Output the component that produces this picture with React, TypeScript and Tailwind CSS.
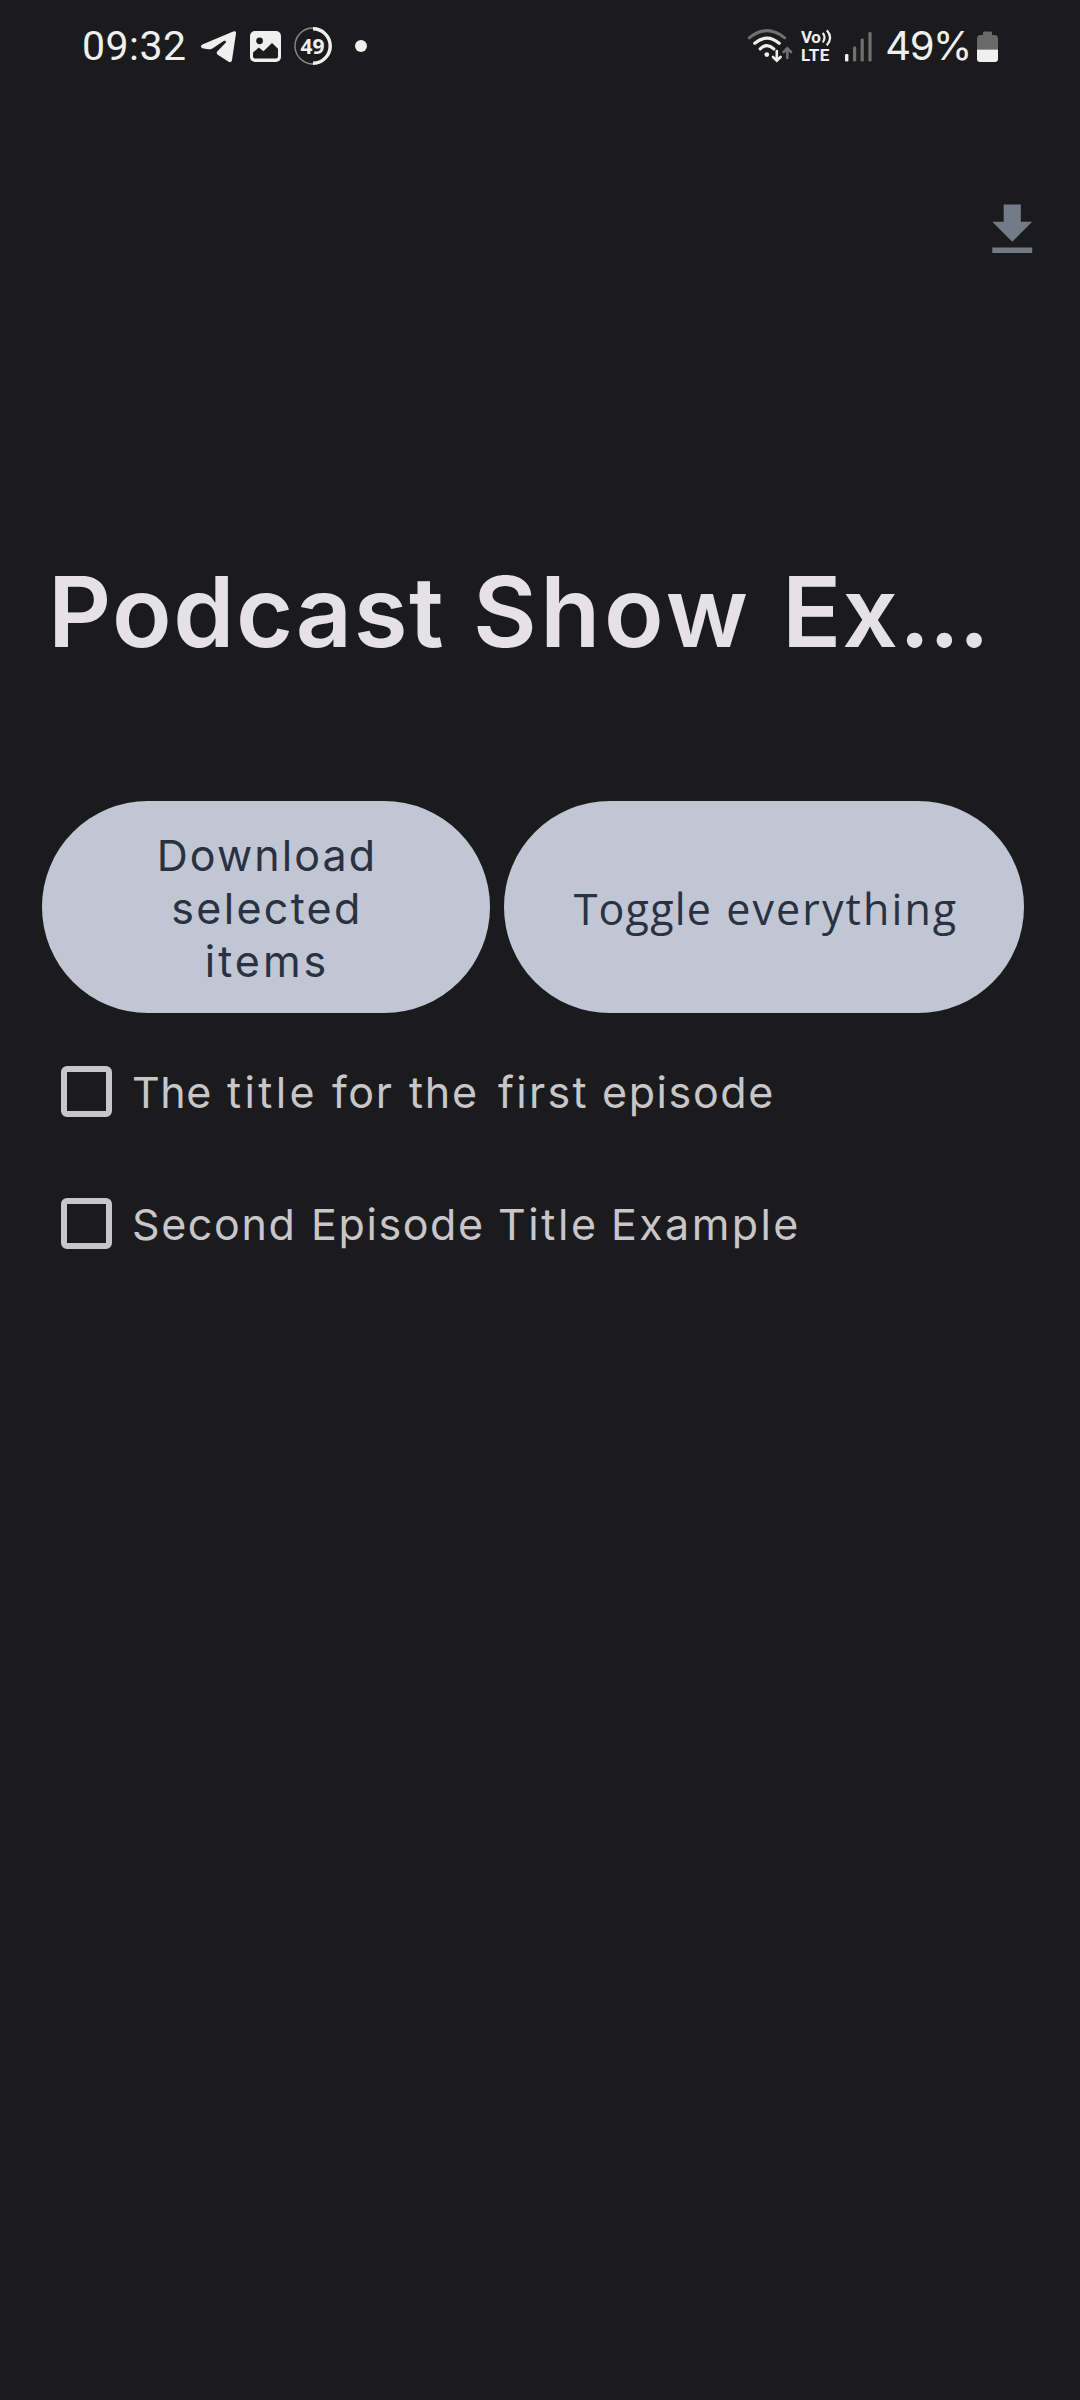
import React from "react";

function TelegramIcon() {
  return (
    <svg className="ml-[13px] h-9 w-9" viewBox="200 29 36 36" fill="#efefef">
      <path d="M202.3 45.6 233.2 32.4Q236.4 31.4 236 34.6L232 61Q231.3 64.2 228.6 62.8L217.4 55.4Q216 54 217.2 52.4L225.9 43.4Q226.3 41.2 224 41.8L212.4 49.4Q210.2 50.6 208 50.2L202.3 49.2Q199.4 47.6 202.3 45.6Z" />
    </svg>
  );
}

function PictureIcon() {
  return (
    <svg className="ml-[14px] h-[31px] w-[31px]" viewBox="0 0 31 31">
      <rect width="31" height="31" rx="5" fill="#efefef" />
      <circle cx="9.6" cy="9.8" r="3.4" fill="#1b1b1d" />
      <path d="M3 21.5 8.8 16.6 13.5 20.2 22 12 28 17.8V25.5Q28 27.5 26 27.5H5Q3 27.5 3 25.5Z" fill="#1b1b1d" />
    </svg>
  );
}

function BatteryRing() {
  return (
    <span className="ml-[13px] grid h-[38px] w-[38px] place-items-center">
      <svg className="col-start-1 row-start-1" width="38" height="38" viewBox="0 0 38 38" fill="none">
        <circle cx="19" cy="19" r="18" stroke="#8a8a8b" strokeWidth="1.4" />
        <path d="M19 1.8A17.2 17.2 0 0 1 19 36.2" stroke="#efefef" strokeWidth="3.4" />
      </svg>
      <span className="col-start-1 row-start-1 font-['Open_Sans'] text-[21px] leading-none font-bold">49</span>
    </span>
  );
}

function WifiIcon() {
  return (
    <svg className="h-10 w-[46px]" viewBox="747 27 46 40" fill="none" strokeLinecap="round">
      <path d="M749.3 38.8Q767 24.5 784.7 38.8" stroke="#707071" strokeWidth="3" />
      <path d="M754.8 44.3Q767 34 779.2 44.3" stroke="#efefef" strokeWidth="3.2" />
      <path d="M760.2 49.8Q767 43.5 773.8 49.8" stroke="#efefef" strokeWidth="3.2" />
      <circle cx="766.8" cy="55.6" r="2.4" fill="#efefef" />
      <path d="M776.8 52V61M773 58 776.8 61.6 780.6 58" stroke="#efefef" strokeWidth="2.6" />
      <path d="M787.3 59V49.5M783.6 53 787.3 49.4 791 53" stroke="#707071" strokeWidth="2.6" />
    </svg>
  );
}

function VolteIcon() {
  return (
    <svg className="ml-2 h-[40px] w-[32px]" viewBox="0 0 32 40" fill="none">
      <text x="0" y="17.4" fontFamily="Roboto" fontWeight="700" fontSize="17" letterSpacing="-0.4" fill="#efefef">Vo</text>
      <path d="M21.8 6.8Q25.2 11.6 21.8 16.4M25.8 4.2Q32.4 11.6 25.8 19.4" stroke="#efefef" strokeWidth="2.2" />
      <text x="0" y="35.2" fontFamily="Roboto" fontWeight="700" fontSize="17" letterSpacing="0.5" fill="#efefef">LTE</text>
    </svg>
  );
}

function SignalIcon() {
  return (
    <svg className="ml-[12px] h-[31px] w-[28px]" viewBox="0 0 28 31">
      <rect x="0" y="23" width="3.4" height="7.5" rx="1.2" fill="#efefef" />
      <rect x="8" y="15.5" width="3.2" height="15" rx="1.2" fill="#707071" />
      <rect x="15.6" y="7.5" width="3.2" height="23" rx="1.2" fill="#707071" />
      <rect x="23.4" y="1" width="3.2" height="29.5" rx="1.2" fill="#707071" />
    </svg>
  );
}

function BatteryIcon() {
  return (
    <svg className="ml-[6px] h-[31px] w-[22px]" viewBox="0 0 22 31">
      <path d="M6 4V1.8Q6 .5 7.5 .5H13.5Q15 .5 15 1.8V4H17.5Q21 4 21 7.5V18.5H0V7.5Q0 4 3.5 4Z" fill="#69696a" />
      <path d="M0 18.5H21V28Q21 31 18 31H3Q0 31 0 28Z" fill="#efefef" />
    </svg>
  );
}

function Episode({ children }: { children: React.ReactNode }) {
  return (
    <label className="flex h-[132px] items-center">
      <span className="h-[51px] w-[51px] rounded-[6px] border-[6px] border-[#c8c6c8]" />
      <span className="ml-[20px] flex pt-[3px] whitespace-nowrap">{children}</span>
    </label>
  );
}

export default function App() {
  return (
    <div className="flex h-[2400px] w-[1080px] flex-col overflow-hidden bg-[#1b1b1d] font-['Inter',sans-serif]">
      <header className="flex h-[92px] items-center pr-[81px] pl-[82px] text-[#efefef]">
        <span className="font-['Roboto'] text-[41px] leading-none tracking-[0.5px]">09:32</span>
        <TelegramIcon />
        <PictureIcon />
        <BatteryRing />
        <span className="ml-[23px] h-3 w-3 rounded-full bg-[#efefef]" />
        <span className="flex-1" />
        <WifiIcon />
        <VolteIcon />
        <SignalIcon />
        <span className="ml-[12px] font-['Inter'] text-[40px] leading-none tracking-[-1.4px]">49%</span>
        <BatteryIcon />
      </header>

      <div className="flex h-[200px] justify-end pt-[104px] pr-[34px]">
        <svg className="h-[68.5px] w-[68.5px]" viewBox="0 0 24 24" fill="#737b87">
          <path d="M5 20h14v-2H5v2zM19 9h-4V3H9v6H5l7 7 7-7z" />
        </svg>
      </div>

      <h1 className="mt-[260px] flex h-[120px] pl-[48px] text-[98px] leading-[120px] font-[560] whitespace-nowrap text-[#e4e2e4]">
        <span className="w-[425px] tracking-[1.6px]">Podcast</span>
        <span className="w-[309px] tracking-[3.6px]">Show</span>
        <span className="tracking-[1px]">Ex</span>
        <span className="tracking-[-1.6px]">...</span>
      </h1>

      <div className="mt-[129px] flex h-[212px] gap-[14px] px-[42px] text-[#2a3140]">
        <button className="flex w-[448px] flex-col items-center justify-center rounded-full bg-[#c0c6d4] pt-[2px] pl-[2px] text-[43px] leading-[53px]">
          <span className="tracking-[2.1px]">Download</span>
          <span className="tracking-[2.3px]">selected</span>
          <span className="tracking-[3px]">items</span>
        </button>
        <button className="flex w-[520px] items-center justify-center rounded-full bg-[#c0c6d4] pt-[2px] pl-[4px] font-['Open_Sans'] text-[43px] leading-[53px] whitespace-nowrap">
          <span className="w-[152.5px] text-left tracking-[1.2px]">Toggle</span>
          <span className="tracking-[2.1px]">everything</span>
        </button>
      </div>

      <main className="mt-[12px] flex flex-col pl-[61px] text-[43px] leading-[53px] text-[#c8c6c8]">
        <Episode>
          <span className="w-[95px] tracking-[0.5px]">The</span>
          <span className="w-[105px] tracking-[3.4px]">title</span>
          <span className="w-[77px] tracking-[1.6px]">for</span>
          <span className="w-[89px] tracking-[1.8px]">the</span>
          <span className="w-[104px] tracking-[2.3px]">first</span>
          <span className="tracking-[1.6px]">episode</span>
        </Episode>
        <Episode>
          <span className="w-[179px] tracking-[1.6px]">Second</span>
          <span className="w-[187px] tracking-[1.6px]">Episode</span>
          <span className="w-[113px] tracking-[2.6px]">Title</span>
          <span className="tracking-[2.4px]">Example</span>
        </Episode>
      </main>
    </div>
  );
}
